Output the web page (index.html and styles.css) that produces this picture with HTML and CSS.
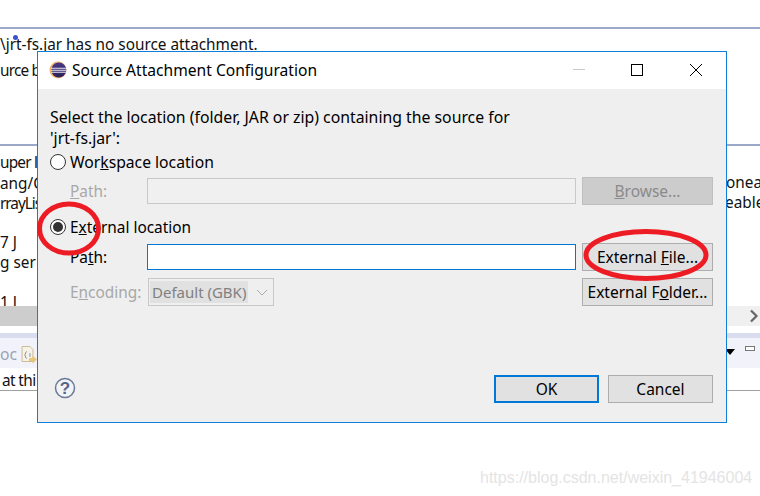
FILE: index.html
```html
<!DOCTYPE html>
<html lang="en">
<head>
<meta charset="utf-8">
<title>Source Attachment Configuration</title>
<link rel="stylesheet" href="styles.css">
</head>
<body>
<div class="desktop">
  <div class="rule rule-top"></div>
  <div class="rule rule-mid"></div>
  <span class="dot"></span>
  <span class="bg-text t1">\jrt-fs.jar has no source attachment.</span>
  <span class="bg-text t2">urce b</span>
  <span class="bg-text t3">uper l</span>
  <span class="bg-text t4">ang/C</span>
  <span class="bg-text t5">rrayLis</span>
  <span class="bg-text t6">7 J</span>
  <span class="bg-text t7">g ser</span>
  <span class="bg-text t8">1 J</span>
  <span class="bg-text t9">onea</span>
  <span class="bg-text t10">eable</span>
  <span class="bg-text t11">at thi</span>
  <div class="scrollbar"><div class="scroll-end"><svg class="chev" width="10" height="14" viewBox="0 0 10 14"><path d="M2 1.500 7.500 7 2 12.500" fill="none" stroke="#666" stroke-width="2.200"/></svg></div></div>
  <div class="band"></div>
  <div class="toolbar">
    <span class="tool-text">oc</span>
    <svg class="tool-icon" width="16" height="18" viewBox="0 0 16 18"><path d="M1 .5h8l3 3v12H1z" fill="#f6f2e6" stroke="#cdbb94"/><path d="M6 5.500 4.500 6.500v1.500L3.500 9l1 1v1.500L6 12.500" fill="none" stroke="#8a94b0"/><path d="M8 8h2M8 10h2" stroke="#8a94b0"/><path d="M8 12h3.500v-2.500l4.500 4-4.500 4V15H8z" fill="#e6c878"/></svg>
    <span class="tri"></span>
    <span class="mini"></span>
  </div>
  <div class="rule-low"></div>
  <div class="watermark">https://blog.csdn.net/weixin_41946004</div>

  <section class="dialog">
    <header class="titlebar">
      <svg class="logo" width="18" height="18" viewBox="0 0 18 18"><defs><linearGradient id="g" x1="0" y1="0" x2="0" y2="1"><stop offset="0" stop-color="#473788"/><stop offset="1" stop-color="#2c2255"/></linearGradient></defs><circle cx="9" cy="9" r="8.500" fill="#f0b070"/><circle cx="9.800" cy="9" r="7.500" fill="url(#g)"/><path d="M2 7.300h15.500M2 9.300h15.800M2 11.300h15.500" stroke="#e8e6ee" stroke-width="1.100"/></svg>
      <span class="title">Source Attachment Configuration</span>
      <span class="win-ctl"><svg width="14" height="14" viewBox="0 0 14 14"><path d="M1 6.500h12" stroke="#c8c8c8"/></svg></span>
      <span class="win-ctl"><svg width="14" height="14" viewBox="0 0 14 14"><rect x="1.500" y="1.500" width="11" height="11" fill="none" stroke="#000"/></svg></span>
      <span class="win-ctl"><svg width="14" height="14" viewBox="0 0 14 14"><path d="M1 1l12 12M13 1 1 13" stroke="#000" fill="none"/></svg></span>
    </header>
    <div class="body">
      <p class="intro">Select the location (folder, JAR or zip) containing the source for<br>'jrt-fs.jar':</p>
      <div class="radio-row first"><span class="radio"></span><span>Wor<u>k</u>space location</span></div>
      <div class="field-row">
        <span class="lbl off"><u>P</u>ath:</span>
        <span class="input off"></span>
        <span class="btn disabled"><span><u>B</u>rowse...</span></span>
      </div>
      <div class="radio-row second"><span class="radio on"></span><span class="ext-label">E<u>x</u>ternal location</span></div>
      <div class="field-row tight">
        <span class="lbl">Pa<u>t</u>h:</span>
        <span class="input focus"></span>
        <span class="btn"><span>External <u>F</u>ile...</span></span>
      </div>
      <div class="field-row tight gap7">
        <span class="lbl off">E<u>n</u>coding:</span>
        <span class="select"><span class="select-val">Default (GBK)</span><svg width="12" height="7" viewBox="0 0 12 7"><path d="M1 1l5 5 5-5" fill="none" stroke="#aaa"/></svg></span>
        <span class="spring"></span>
        <span class="btn"><span>External F<u>o</u>lder...</span></span>
      </div>
      <footer class="actions">
        <svg class="help" width="22" height="22" viewBox="0 0 22 22"><circle cx="11" cy="11" r="9.500" fill="#f2f3f6" stroke="#6b7a99" stroke-width="1.500"/><text x="11" y="17" text-anchor="middle" class="help-q">?</text></svg>
        <span class="spring"></span>
        <span class="btn wide default">OK</span>
        <span class="btn wide">Cancel</span>
      </footer>
    </div>
  </section>

  <svg class="marks" width="760" height="496" viewBox="0 0 760 496">
    <ellipse cx="69" cy="228.500" rx="29.500" ry="24.500" fill="none" stroke="#ed1c24" stroke-width="5"/>
    <ellipse cx="646" cy="255" rx="60" ry="23.500" fill="none" stroke="#ed1c24" stroke-width="5"/>
  </svg>
</div>
</body>
</html>
```
FILE: styles.css
```css
* { box-sizing: border-box; }
html, body { margin: 0; padding: 0; background: #fff; }
.desktop {
  position: relative;
  width: 760px;
  height: 496px;
  overflow: hidden;
  font-family: "Noto Sans", "Open Sans", sans-serif;
  font-size: 15.7px;
  color: #000;
}
.rule { position: absolute; left: 0; width: 760px; height: 2px; background: #9aa9c9; }
.rule-top { top: 27px; }
.rule-mid { top: 144px; }
.dot { position: absolute; left: 13px; top: 35px; width: 5px; height: 5px; border-radius: 50%; background: #3b4fd0; }
.bg-text { position: absolute; line-height: 20px; white-space: nowrap; color: #111; font-size: 15.35px; }
.t1 { left: 0; top: 34px; }
.t2 { left: 0; top: 60px; letter-spacing: -0.8px; }
.t3 { left: 0; top: 152px; letter-spacing: -0.8px; }
.t4 { left: 0; top: 173px; }
.t5 { left: 0; top: 193px; letter-spacing: -1px; }
.t6 { left: 0; top: 232px; }
.t7 { left: 0; top: 252px; }
.t8 { left: 0; top: 292px; }
.t9 { left: 726px; top: 172px; }
.t10 { left: 725px; top: 192px; }
.t11 { left: 2px; top: 370px; letter-spacing: -0.6px; }
.scrollbar { position: absolute; left: 0; top: 306px; width: 760px; height: 20px; background: #cdcdcd; }
.scroll-end { position: absolute; left: 727px; top: 0; width: 33px; height: 20px; background: #f0f0f0; }
.chev { position: absolute; left: 22px; top: 3px; }
.band { position: absolute; left: 0; top: 333px; width: 760px; height: 5px; background: #d9ddee; }
.toolbar { position: absolute; left: 0; top: 338px; width: 760px; height: 30px; background: #f2f3fa; }
.tool-text { position: absolute; left: 0; top: 6px; color: #9aa3b5; line-height: 20px; }
.tool-icon { position: absolute; left: 21px; top: 8px; }
.tri { position: absolute; left: 725px; top: 11px; border-style: solid; border-width: 6px 5px 0; border-color: #000 transparent transparent; }
.mini { position: absolute; left: 745px; top: 8px; width: 10px; height: 5px; border: 1px solid #777; background: #fff; }
.rule-low { position: absolute; left: 0; top: 390px; width: 760px; height: 1px; background: #a0a0a0; }
.watermark { position: absolute; left: 480px; top: 468px; font-family: "Liberation Sans", sans-serif; font-size: 16px; line-height: 20px; color: #e4e4e4; white-space: nowrap; }

.dialog { position: absolute; left: 37px; top: 51px; width: 690px; height: 372px; border: 1px solid #0f7fd9; background: #efefef; display: flex; flex-direction: column; }
.titlebar { height: 37px; background: #fff; display: flex; align-items: center; padding: 0 1px 2px 11px; flex: none; }
.logo { flex: none; margin-right: 5px; }
.title { flex: 1; font-size: 15.6px; }
.win-ctl { width: 58.5px; display: flex; justify-content: center; align-items: center; flex: none; }
.body { flex: 1; padding: 18px 13px 19px 12px; display: flex; flex-direction: column; }
.intro { margin: 0; line-height: 21px; font-size: 15.8px; }
.radio-row { display: flex; align-items: center; gap: 4px; height: 20px; }
.radio-row.first { margin-top: 3px; }
.radio-row.second { margin-top: 12px; }
.ext-label { font-size: 15.4px; }
.radio { width: 16px; height: 16px; border-radius: 50%; border: 1px solid #333; background: #fff; display: block; flex: none; position: relative; }
.radio.on::after { content: ""; position: absolute; left: 2px; top: 2px; width: 10px; height: 10px; border-radius: 50%; background: #333; }
.field-row { display: flex; align-items: center; height: 28px; margin-top: 5px; }
.field-row.tight { margin-top: 6px; }
.field-row.gap7 { margin-top: 7px; }
.lbl { width: 77px; padding-left: 20px; flex: none; font-size: 15.4px; }
.lbl.off { color: #a8a8a8; }
.input { width: 429px; height: 26px; flex: none; border: 1px solid #c8c8c8; background: #f0f0f0; margin-left: 20px; margin-right: 6px; }
.input.focus { border-color: #0078d7; background: #fff; }
.btn { width: 131px; height: 28px; flex: none; background: #e1e1e1; border: 1px solid #adadad; display: flex; align-items: center; justify-content: center; white-space: nowrap; font-size: 15.5px; }
.btn.disabled { background: #ccc; border-color: #bfbfbf; color: #8a8a8a; }
.select { width: 126px; height: 28px; margin-left: 21px; border: 1px solid #c8c8c8; background: #efefef; display: flex; align-items: center; padding: 2px 1px; gap: 8px; flex: none; }
.select-val { background: #e1e1e1; color: #808080; height: 22px; line-height: 22px; padding: 0 2px; white-space: nowrap; flex: none; font-size: 15px; }
.spring { flex: 1; }
.actions { margin-top: auto; display: flex; align-items: center; gap: 9px; }
.help { margin: 0 0 2px 4px; }
.help-q { font-family: "Liberation Sans", sans-serif; font-size: 17px; font-weight: bold; fill: #56658a; }
.btn.wide { width: 105px; }
.btn.default { border: 2px solid #0078d7; }
.marks { position: absolute; left: 0; top: 0; pointer-events: none; }
```
